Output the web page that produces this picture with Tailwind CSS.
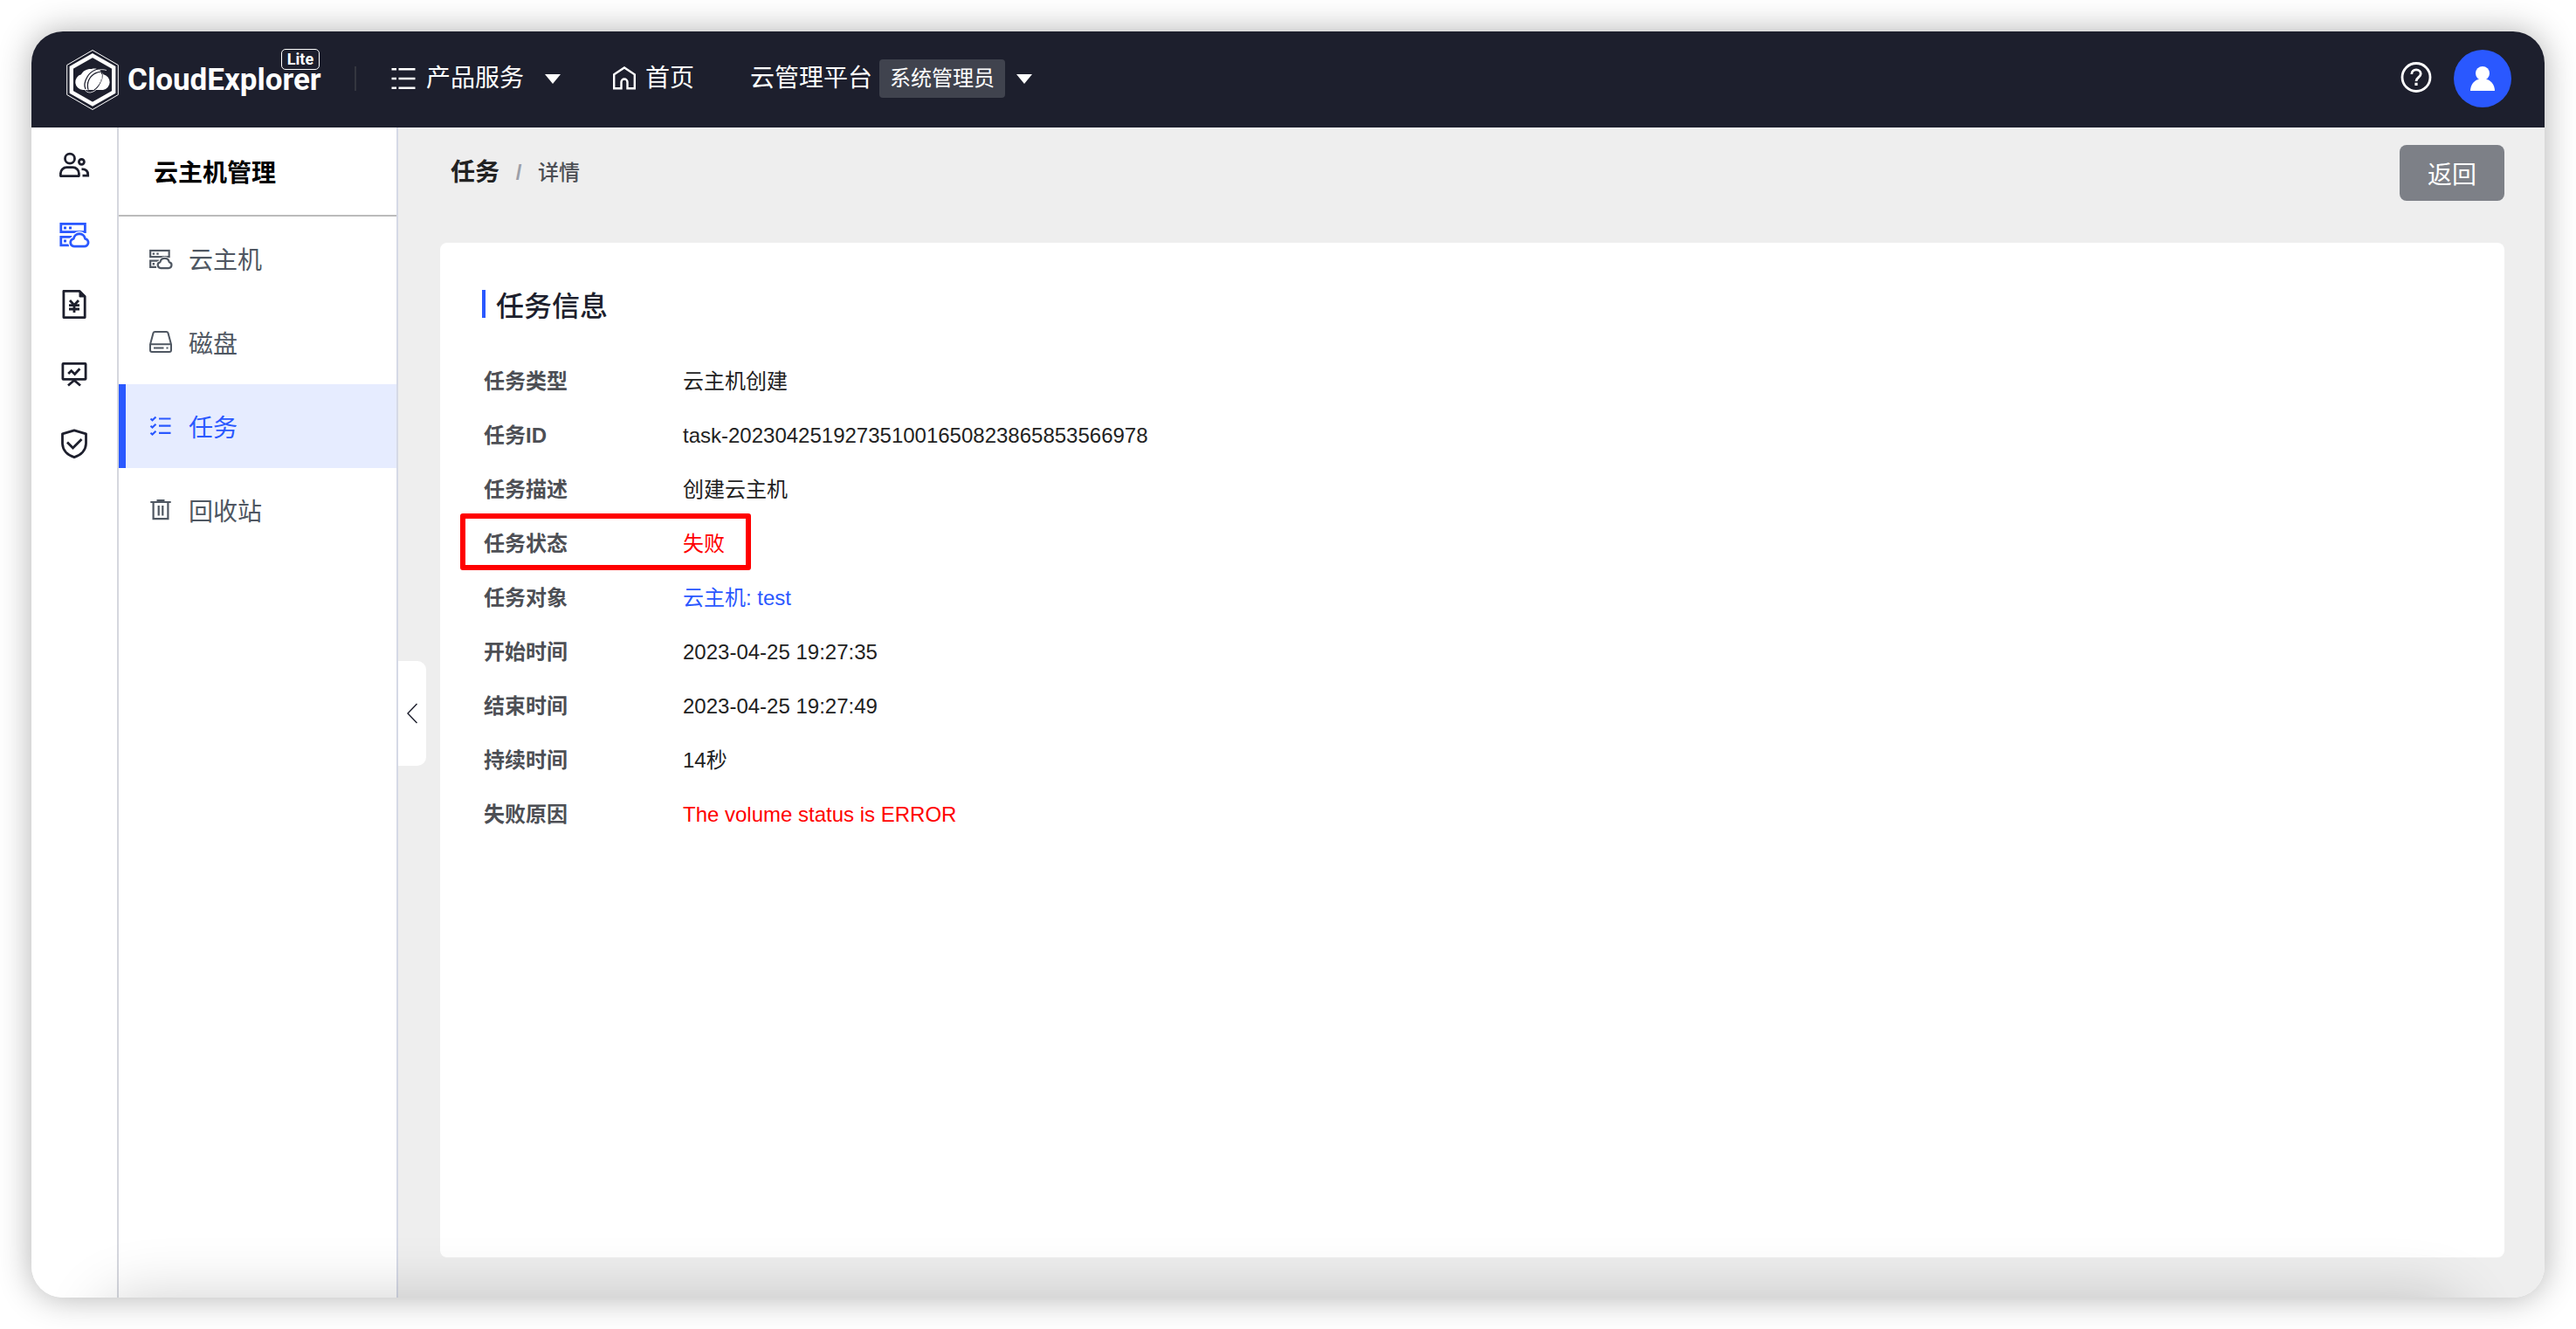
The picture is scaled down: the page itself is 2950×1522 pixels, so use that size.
<!DOCTYPE html>
<html lang="zh-CN">
<head>
<meta charset="utf-8">
<meta name="viewport" content="width=device-width, initial-scale=1">
<title>CloudExplorer Lite</title>
<script src="https://cdn.jsdelivr.net/npm/@tailwindcss/browser@4"></script>
</head>
<body class="flex min-h-screen flex-col bg-white p-9 font-['Liberation_Sans','Noto_Sans_CJK_SC',sans-serif] text-[#1d1f2d]">
<svg class="hidden" aria-hidden="true">
  <symbol id="server-cloud" viewBox="0 0 36 36">
    <g fill="none" stroke="currentColor" stroke-width="2.8">
      <rect x="2.8" y="6.4" width="27.6" height="9.2"/>
      <path d="M16 21.4H2.8v9.4H12"/>
    </g>
    <path d="M6 9.5h3v3H6zM12 9.5h3v3h-3zM6 24.5h3v3H6z" fill="currentColor"/>
    <path d="M18.4 32.2h11.2a4.5 4.5 0 0 0 .9-8.9 6.7 6.7 0 0 0-13.2 0 4.5 4.5 0 0 0 1.1 8.9z" fill="#fff" stroke="#fff" stroke-width="5.4"/>
    <path d="M18.4 32.2h11.2a4.5 4.5 0 0 0 .9-8.9 6.7 6.7 0 0 0-13.2 0 4.5 4.5 0 0 0 1.1 8.9z" fill="#fff" stroke="currentColor" stroke-width="2.8" stroke-linejoin="round"/>
  </symbol>
</svg>

<div class="relative flex flex-1 flex-col overflow-hidden rounded-[36px] shadow-[0_0_38px_rgba(0,0,0,0.31)]">
  <header class="flex h-[110px] shrink-0 items-center bg-[#1d1f2d] pr-[38px] pb-[2px] pl-10 text-[28px] leading-10 text-white">
    <a href="#" class="flex items-start gap-[10px] self-start pt-5" aria-label="CloudExplorer Lite">
      <svg class="h-[70px] w-[60px]" viewBox="0 0 60 70" fill="none" stroke="#fff">
        <path d="M30 1.5 59.3 18.5v34L30 69.5.7 52.500v-34z" stroke-width="1"/>
        <path d="M30 7.600 54.200 21.400v28L30 63.200 5.800 49.400v-28z" stroke-width="4.400"/>
        <path d="M19 47a9 9 0 0 1-2-17.700C19 25 24 22.500 29 23c5-1.500 11 1 13.500 6.300A9 9 0 0 1 42 47z" fill="#fff" stroke="none"/>
        <g stroke="#1d1f2d" stroke-width="1.300">
          <path d="M45 24c-9-3-17 1-21 8-3 5-4 10-2 14"/>
          <path d="M46 27c-9-3-17 2-20 8-2 4-2 8-1 12"/>
          <path d="M40 25c3 8-1 17-8 22"/>
        </g>
        <path d="M46 24.500c-8-2.500-15 .5-19.500 7-4 6-4.500 12-2 16M40.500 29c1 8-3 19-13 21-3 0-5-1-6-3" stroke-width=".8"/>
      </svg>
      <span class="flex w-[220px] flex-col-reverse font-[Roboto] font-bold">
        <span class="text-[35px] leading-6">CloudExplorer</span>
        <span class="flex h-6 w-11 items-center justify-center self-end rounded-[5px] border border-white text-[18px] leading-5">Lite</span>
      </span>
    </a>
    <span class="ml-10 h-7 w-[2px] bg-[#34363f]"></span>
    <nav class="flex items-center">
      <button class="ml-10 flex items-center">
        <svg class="mr-3 h-7 w-7" viewBox="0 0 28 28" stroke="#fff" stroke-width="2.400"><path d="M.5 3.300H6M8.500 3.300H27.500M.5 14H6M8.500 14H27.500M.5 24.700H6M8.500 24.700H27.500"/></svg>
        产品服务
        <svg class="ml-6 h-3 w-[18px]" viewBox="0 0 18 12" fill="#fff"><path d="M0 1h18L9 12z"/></svg>
      </button>
      <a href="#" class="ml-[59px] flex items-center">
        <svg class="mr-[10px] h-7 w-7" viewBox="0 0 28 28" fill="none" stroke="#fff" stroke-width="2.400"><path d="M2.200 9.300 14 1.500l11.800 7.800v15.900h-8.300v-7.200a3.500 3.500 0 0 0-7 0v7.200H2.200z"/></svg>
        首页
      </a>
      <button class="ml-16 flex items-center">
        云管理平台
        <span class="ml-2 flex h-11 items-center rounded bg-[#40434e] px-3 text-[24px]">系统管理员</span>
        <svg class="ml-[13px] h-3 w-[18px]" viewBox="0 0 18 12" fill="#fff"><path d="M0 1h18L9 12z"/></svg>
      </button>
    </nav>
    <button class="mr-6 ml-auto" aria-label="帮助">
      <svg class="h-9 w-9 overflow-visible" viewBox="0 0 36 36" fill="none" stroke="#fff" stroke-width="2.800"><circle cx="17" cy="16.500" r="16"/><path d="M11.800 12.900c0-3 2.200-5 5.200-5s5.200 2 5.200 4.700c0 4-5.200 4.200-5.200 8.300"/><path d="M15.400 22.700h3.200v3.200h-3.200z" fill="#fff" stroke="none"/></svg>
    </button>
    <button class="flex h-[66px] w-[66px] items-center justify-center rounded-full bg-[#2a58ff]" aria-label="用户">
      <svg class="h-7 w-7" viewBox="0 0 28 28" fill="#fff"><circle cx="14" cy="8" r="8"/><path d="M0 28c0-7 5-13 11-13.500h6C23 15 28 21 28 28z"/></svg>
    </button>
  </header>

  <div class="flex flex-1">
    <nav class="flex w-[100px] shrink-0 flex-col items-center border-r-2 border-[#d5d7de] bg-white pt-[2px]" aria-label="模块">
      <a href="#" class="flex h-20 items-center" aria-label="用户管理">
        <svg class="h-9 w-9" viewBox="0 0 36 36" fill="none" stroke="currentColor" stroke-width="2.800"><circle cx="13" cy="11.700" r="5.500"/><path d="M2.400 31.600v-3a7 7 0 0 1 7-7h7a7 7 0 0 1 7 7v3z" stroke-linejoin="round"/><circle cx="26.400" cy="15.300" r="3"/><path d="M26.500 23.600c4.500 0 7.200 2.400 7.200 6.400v1.200H27.500"/></svg>
      </a>
      <a href="#" class="flex h-20 items-center text-[#2a58ff]" aria-label="云主机管理"><svg class="h-9 w-9"><use href="#server-cloud"/></svg></a>
      <a href="#" class="flex h-20 items-center" aria-label="账单">
        <svg class="h-9 w-9" viewBox="0 0 36 36" fill="none" stroke="currentColor" stroke-width="2.800"><path d="M5.900 3.400h18.300l6 6v24.200H5.900z" stroke-linejoin="round"/><path d="M24 3v7h7z" fill="currentColor" stroke-width="1"/><path d="m13 14 5 5.500L23 14M12 19.600h12M12 24h12M18 19v9"/></svg>
      </a>
      <a href="#" class="flex h-20 items-center" aria-label="监控">
        <svg class="h-9 w-9" viewBox="0 0 36 36" fill="none" stroke="currentColor" stroke-width="2.800"><rect x="4.900" y="6.400" width="26.200" height="18" rx=".6"/><path d="m11.200 18 3.500-3.400 3.900 3.800 5.800-6.200M11 31.500l7-6 7 6"/></svg>
      </a>
      <a href="#" class="flex h-20 items-center" aria-label="安全">
        <svg class="h-9 w-9" viewBox="0 0 36 36" fill="none" stroke="currentColor" stroke-width="2.800"><path d="M18 2.800 31.500 6.800v10.500c0 8-5.500 13.800-13.500 16.300C10 31.100 4.500 25.300 4.500 17.300V6.800z" stroke-linejoin="round"/><path d="m10 16.500 6.500 6.500 10-10"/></svg>
      </a>
    </nav>

    <aside class="w-80 shrink-0 border-r-2 border-[#d5d9e6] bg-white font-['Noto_Sans_CJK_SC',sans-serif] text-[28px] leading-10">
      <h1 class="flex h-[102px] items-center border-b-2 border-[#bbbbbb] pl-10 font-bold text-black">云主机管理</h1>
      <ul class="text-[#4f5762]">
        <li><a href="#" class="flex h-24 items-center gap-[18px] pl-[34px]"><svg class="h-7 w-7"><use href="#server-cloud"/></svg>云主机</a></li>
        <li><a href="#" class="flex h-24 items-center gap-[18px] pl-[34px]">
          <svg class="h-7 w-7" viewBox="0 0 28 28" fill="none" stroke="currentColor" stroke-width="2"><path d="M2 16.500 5.500 3.400Q6 2 7.400 2H20.600Q22 2 22.500 3.400L26 16.500V23a2 2 0 0 1-2 2H4a2 2 0 0 1-2-2zM2 16.300H26M6 20.500H17.500M20.500 20.500H22.500"/></svg>磁盘</a></li>
        <li><a href="#" aria-current="page" class="flex h-24 items-center gap-[18px] border-l-8 border-[#2a58ff] bg-[#e6ecff] pl-[26px] text-[#2a58ff]">
          <svg class="h-7 w-7" viewBox="0 0 28 28" fill="none" stroke="currentColor" stroke-width="2.200"><path d="M12 5.500H25.500M12 13.700H25.500M12 21.800H25.500M2.500 5.500 4.500 7.300 8.500 3.500M2.500 13.700 4.500 15.500 8.500 11.700M2.500 21.800 4.500 23.600 8.500 19.800"/></svg>任务</a></li>
        <li><a href="#" class="flex h-24 items-center gap-[18px] pl-[34px]">
          <svg class="h-7 w-7" viewBox="0 0 28 28" fill="none" stroke="currentColor" stroke-width="2.200"><path d="M2.300 5H25.700M9.500 3H18.500M5.600 5V24.200H22.400V5M11.700 9V20.500M16.300 9V20.500"/></svg>回收站</a></li>
      </ul>
    </aside>

    <main class="relative flex flex-1 flex-col bg-[#eeeeee] pr-[46px] pb-[46px] pl-12">
      <button class="absolute top-[611px] left-0 flex h-[120px] w-8 items-center justify-center rounded-r-[10px] bg-white" aria-label="收起">
        <svg class="h-6 w-3" viewBox="0 0 12 24" fill="none" stroke="#1d1f2d" stroke-width="1.400"><path d="M11.500 1 1 12 11.500 23"/></svg>
      </button>
      <div class="flex h-[132px] items-start justify-between pt-5">
        <nav class="flex h-16 items-center pl-3 text-[24px] font-bold" aria-label="面包屑">
          <a href="#" class="text-[28px] text-[#222222]">任务</a>
          <span class="w-11 text-center text-[#9c9fa8]">/</span>
          <span class="font-medium text-[#4d4f55]">详情</span>
        </nav>
        <button class="h-16 w-[120px] rounded-lg bg-[#7d8087] font-['Noto_Sans_CJK_SC',sans-serif] text-[28px] leading-10 text-white">返回</button>
      </div>
      <section class="flex-1 rounded-lg bg-white px-12 pt-[54px]">
        <h2 class="flex h-8 items-center border-l-4 border-[#2a58ff] pl-3 font-['Noto_Sans_CJK_SC',sans-serif] text-[32px] font-medium">任务信息</h2>
        <dl class="mt-[42px] pl-[2px] text-[24px] leading-[62px] text-[#222222]">
          <div class="flex"><dt class="w-[228px] font-bold text-[#4d4f55]">任务类型</dt><dd>云主机创建</dd></div>
          <div class="flex"><dt class="w-[228px] font-bold text-[#4d4f55]">任务ID</dt><dd>task-202304251927351001650823865853566978</dd></div>
          <div class="flex"><dt class="w-[228px] font-bold text-[#4d4f55]">任务描述</dt><dd>创建云主机</dd></div>
          <div class="relative flex"><dt class="w-[228px] font-bold text-[#4d4f55]">任务状态</dt><dd class="text-[#ff0000]">失败</dd>
            <span class="absolute -top-1 -left-[27px] h-[65px] w-[333px] rounded-[3px] border-[6px] border-[#ff0000]"></span></div>
          <div class="flex"><dt class="w-[228px] font-bold text-[#4d4f55]">任务对象</dt><dd><a href="#" class="text-[#2a58ff]">云主机: test</a></dd></div>
          <div class="flex"><dt class="w-[228px] font-bold text-[#4d4f55]">开始时间</dt><dd>2023-04-25 19:27:35</dd></div>
          <div class="flex"><dt class="w-[228px] font-bold text-[#4d4f55]">结束时间</dt><dd>2023-04-25 19:27:49</dd></div>
          <div class="flex"><dt class="w-[228px] font-bold text-[#4d4f55]">持续时间</dt><dd>14秒</dd></div>
          <div class="flex"><dt class="w-[228px] font-bold text-[#4d4f55]">失败原因</dt><dd class="text-[#ff0000]">The volume status is ERROR</dd></div>
        </dl>
      </section>
    </main>
  </div>
  <!-- soft shade rising from the bottom edge -->
  <div class="pointer-events-none absolute -bottom-40 right-24 left-20 h-40 rounded-[40px] shadow-[0_0_70px_rgba(0,0,0,0.19)]"></div>
</div>
</body>
</html>
